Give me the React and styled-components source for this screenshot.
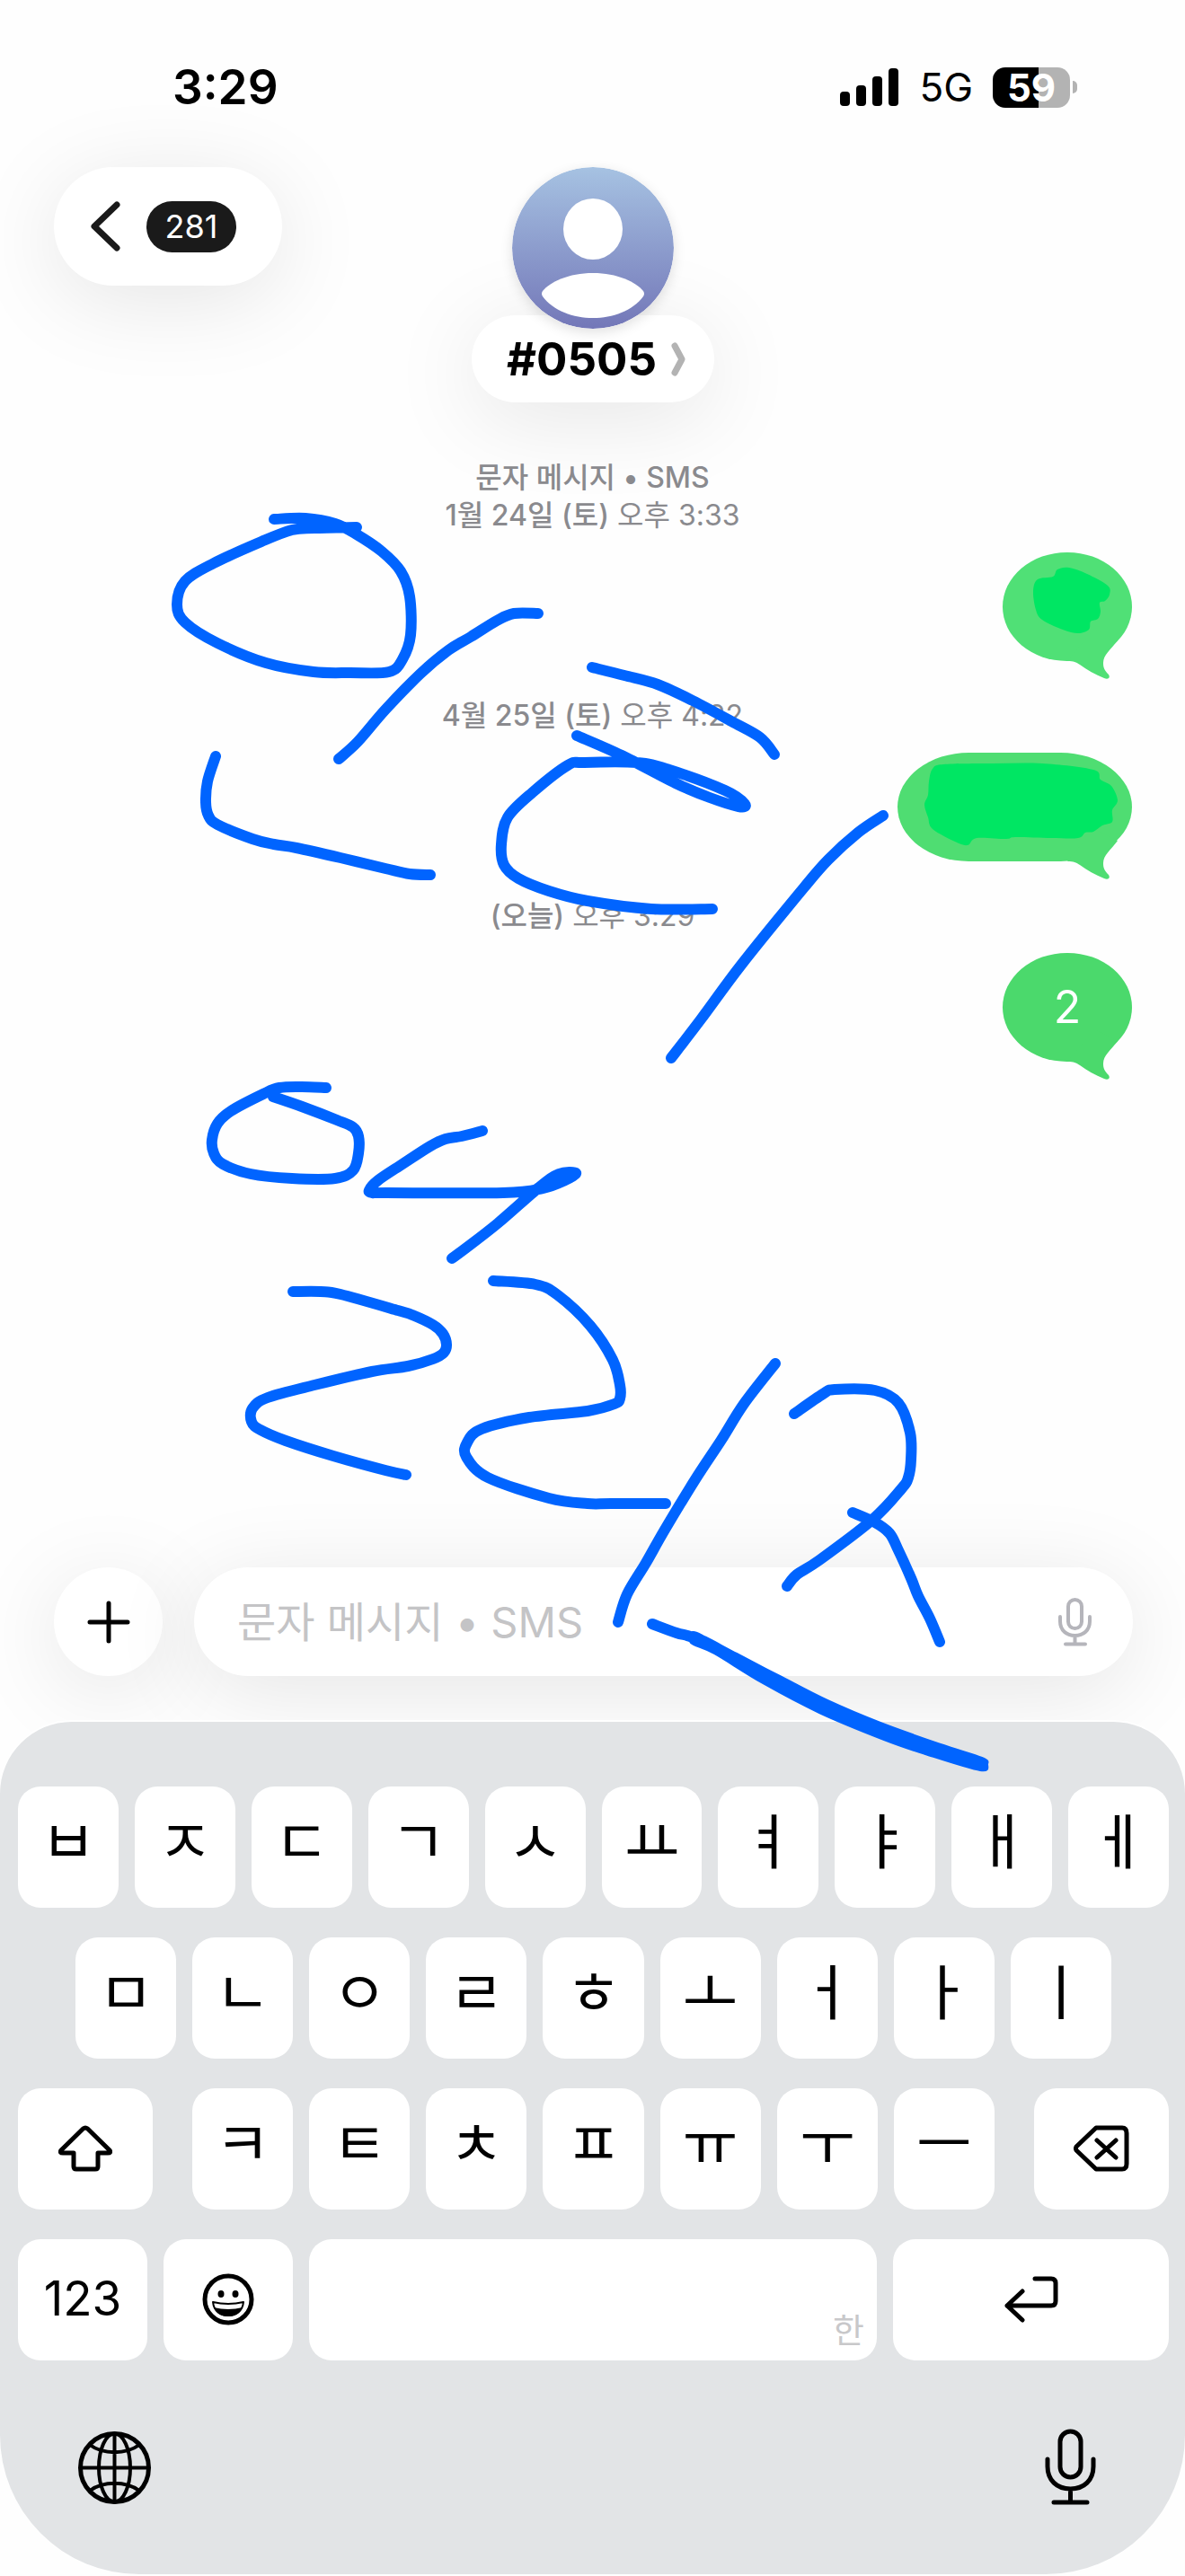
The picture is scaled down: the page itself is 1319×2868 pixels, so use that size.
import React, { useState } from "react";
import styled, { createGlobalStyle, css } from "styled-components";

const GlobalStyle = createGlobalStyle`
  * {
    box-sizing: border-box;
  }

  body {
    margin: 0;
    background-color: #fefefe;
    font-family: Inter, "Noto Sans CJK KR", sans-serif;
    color: #000;
  }

  button, input {
    margin: 0;
    padding: 0;
    border: none;
    background: none;
    font: inherit;
    color: inherit;
  }
`;

const floating = css`
  background-color: #fff;
  box-shadow: 0 16px 100px rgba(0, 0, 0, 0.1);
`;

const Screen = styled.div`
  position: relative;
  display: flex;
  flex-direction: column;
  min-height: 100vh;
  padding-bottom: 2px;
  overflow: hidden;
`;

const StatusBar = styled.header`
  display: flex;
  align-items: center;
  justify-content: space-between;
  height: 118px;
  margin-top: 38px;
  padding: 0 128px 0 192px;
`;

const Time = styled.time`
  font-size: 53px;
  line-height: 80px;
  font-weight: 600;
`;

const StatusIcons = styled.div`
  display: flex;
  align-items: center;
  gap: 22px;
`;

const Network = styled.span`
  font-size: 44px;
  line-height: 80px;
`;

const Battery = styled.div`
  position: relative;
  display: flex;
  align-items: center;
  justify-content: center;
  width: 86px;
  height: 45px;
  border-radius: 14px;
  background: linear-gradient(to right, #000 59%, #b3b3b3 59%);
  color: #fff;
  font-size: 42px;
  font-weight: 700;

  &::after {
    content: "";
    position: absolute;
    right: -8px;
    width: 5px;
    height: 14px;
    border-radius: 0 6px 6px 0;
    background-color: #b3b3b3;
  }
`;

const TopBar = styled.div`
  display: grid;
  grid-template-columns: 1fr auto 1fr;
  align-items: start;
  margin-top: 30px;
  padding: 0 59px 0 60px;
`;

const BackButton = styled.button`
  ${floating}
  display: flex;
  align-items: center;
  justify-self: start;
  gap: 28px;
  height: 132px;
  padding: 0 51px 0 39px;
  border-radius: 66px;
`;

const Unread = styled.span`
  width: 100px;
  border-radius: 29px;
  background-color: #1a1a1a;
  color: #fff;
  font-size: 36px;
  line-height: 57px;
  text-align: center;
`;

const Contact = styled.div`
  display: flex;
  flex-direction: column;
  align-items: center;
`;

const Avatar = styled.svg`
  position: relative;
  z-index: 1;
  display: block;
  border-radius: 50%;
  box-shadow: 0 4px 14px rgba(0, 0, 0, 0.12);
`;

const ContactName = styled.button`
  ${floating}
  display: flex;
  align-items: center;
  gap: 16px;
  height: 97px;
  margin-top: -15px;
  padding: 0 31px 0 39px;
  border-radius: 49px;
  font-size: 51px;
  font-weight: 700;
`;

const Thread = styled.main`
  display: flex;
  flex: 1;
  flex-direction: column;
  padding: 23px 59px 0;
`;

const Stamp = styled.p`
  margin: 0;
  padding: 40px 0 20px;
  color: #8a8a8e;
  font-size: 32px;
  line-height: 42px;
  text-align: center;
`;

const StampDay = styled.span`
  font-weight: 500;
`;

const Bubble = styled.div`
  position: relative;
  align-self: flex-end;
  width: ${(props) => (props.$wide ? "261px" : "144px")};
  height: 121px;
  border-radius: 72px / 61px;
  background-color: ${(props) => props.$tint};
  color: #fff;
  font-size: 50px;
  line-height: 121px;
  text-align: center;
  ${(props) => props.$wide && css`
    border-radius: 80px / 61px;
  `}
`;

const Tail = styled.svg`
  position: absolute;
  right: 8px;
  bottom: -20px;
`;

const Composer = styled.form`
  display: flex;
  gap: 35px;
  padding: 0 58px 51px 60px;
`;

const PlusButton = styled.button`
  ${floating}
  display: flex;
  align-items: center;
  justify-content: center;
  width: 121px;
  height: 121px;
  border-radius: 50%;
`;

const Field = styled.div`
  ${floating}
  display: flex;
  flex: 1;
  align-items: center;
  height: 121px;
  padding: 0 46px 0 48px;
  border-radius: 61px;
`;

const MessageInput = styled.input`
  flex: 1;
  min-width: 0;
  outline: none;
  font-size: 47px;
  line-height: 80px;

  &::placeholder {
    color: #c4c4c6;
    opacity: 1;
  }
`;

const IconButton = styled.button`
  display: flex;
  color: ${(props) => (props.$muted ? "#b5b5bb" : "#000")};
`;

const Keyboard = styled.section`
  position: relative;
  padding: 72px 18px 79px 20px;
  border-radius: 80px 80px 155px 155px;
  background-color: #e2e4e6;
  box-shadow: 0 -2px 0 #fff;
`;

const KeyRow = styled.div`
  display: flex;
  justify-content: space-between;
  gap: 18px;
  margin-bottom: 33px;
  padding: 0 ${(props) => (props.$inset ? "64px" : "0")};
`;

const KeyGroup = styled.div`
  display: flex;
  flex: 892;
  gap: 18px;
  margin: 0 26px;
`;

const Key = styled.button`
  display: flex;
  flex: ${(props) => props.$grow || 112} 1 0;
  align-items: center;
  justify-content: center;
  min-width: 0;
  height: 135px;
  padding-bottom: ${(props) => (props.$letter ? "12px" : "2px")};
  border-radius: 25px;
  background-color: #fff;
  font-size: ${(props) => (props.$letter ? "67px" : "53px")};
  line-height: 1;
`;

const SpaceKey = styled(Key)`
  align-items: flex-end;
  justify-content: flex-end;
  padding: 0 14px 10px;
  color: #c8c8ca;
  font-size: 38px;
  line-height: 48px;
`;

const KeyboardFooter = styled.div`
  display: flex;
  align-items: center;
  justify-content: space-between;
  height: 80px;
  margin-top: 79px;
  padding: 0 81px 0 67px;
`;

const Markup = styled.svg`
  position: absolute;
  top: 0;
  left: 0;
  width: 100%;
  pointer-events: none;
`;

const inkStrokes = [
  [[305, 578], [340, 577], [373, 583], [397, 595], [425, 614], [446, 636], [456, 664], [457, 707], [448, 734], [433, 748], [390, 749], [349, 748], [296, 738], [242, 716], [206, 693], [197, 673], [206, 647], [238, 627], [291, 603], [325, 590], [350, 588], [397, 587]],
  [[599, 683], [572, 683], [553, 691], [524, 709], [499, 724], [468, 750], [429, 790], [398, 826], [377, 845]],
  [[659, 743], [695, 752], [732, 762], [771, 780], [814, 803], [846, 821], [862, 840]],
  [[240, 842], [231, 870], [229, 893], [232, 908], [242, 918], [281, 934], [305, 940], [330, 944], [379, 955], [429, 967], [456, 973], [479, 974]],
  [[642, 819], [692, 841], [752, 872], [790, 888], [822, 898], [829, 895], [807, 880], [745, 857], [709, 849], [650, 849], [632, 852], [593, 882], [565, 910], [558, 940], [561, 963], [577, 978], [611, 992], [654, 1003], [725, 1012], [793, 1012]],
  [[983, 908], [955, 927], [922, 957], [895, 988], [826, 1073], [780, 1135], [747, 1178]],
  [[363, 1211], [336, 1210], [311, 1211], [293, 1218], [257, 1237], [242, 1251], [236, 1269], [238, 1284], [248, 1296], [279, 1307], [325, 1312], [373, 1312], [393, 1303], [399, 1284], [399, 1265], [393, 1255], [375, 1247], [336, 1232], [304, 1221]],
  [[537, 1259], [514, 1265], [496, 1268], [479, 1276], [448, 1296], [421, 1314], [411, 1325], [415, 1328], [430, 1328], [560, 1328], [604, 1323], [629, 1314], [641, 1306], [622, 1307], [600, 1322], [554, 1362], [518, 1390], [503, 1401]],
  [[326, 1438], [357, 1438], [379, 1441], [443, 1459], [459, 1464], [482, 1475], [493, 1485], [497, 1497], [494, 1506], [482, 1513], [454, 1521], [414, 1527], [350, 1542], [298, 1556], [281, 1568], [280, 1583], [290, 1592], [318, 1604], [371, 1621], [429, 1637], [452, 1642]],
  [[549, 1426], [596, 1430], [621, 1442], [657, 1476], [682, 1514], [690, 1542], [690, 1557], [684, 1563], [654, 1571], [589, 1578], [536, 1591], [520, 1606], [519, 1622], [543, 1645], [611, 1668], [654, 1674], [680, 1674], [741, 1674]],
  [[863, 1518], [828, 1563], [803, 1603], [774, 1647], [740, 1703], [719, 1740], [698, 1775], [688, 1806]],
  [[884, 1574], [916, 1552], [929, 1547], [974, 1548], [1000, 1562], [1013, 1595], [1014, 1625], [1011, 1645], [1003, 1658], [971, 1692], [912, 1737], [887, 1753], [876, 1766]],
  [[949, 1684], [974, 1695], [990, 1707], [999, 1724], [1014, 1757], [1022, 1777], [1035, 1802], [1046, 1828]],
  [[726, 1808], [753, 1818], [771, 1823], [802, 1838]],
];

// outline of the last stroke, which gets heavier towards its end
const heavyStroke = [
  [771, 1817], [786, 1823], [820, 1841], [870, 1867], [921, 1893], [980, 1918], [1047, 1942], [1093, 1957], [1099, 1964],
  [1091, 1971], [1030, 1953], [984, 1937], [912, 1907], [849, 1874], [795, 1841], [769, 1829],
];

const coverUps = [
  [[1150, 658], [1155, 645], [1172, 642], [1177, 634], [1190, 632], [1210, 639], [1233, 652], [1235, 662], [1230, 669], [1224, 671], [1225, 681], [1222, 689], [1214, 692], [1212, 701], [1200, 705], [1183, 701], [1160, 690], [1153, 679]],
  [[1034, 870], [1038, 856], [1050, 851], [1105, 850], [1160, 850], [1217, 857], [1225, 868], [1237, 875], [1244, 891], [1238, 902], [1238, 915], [1227, 919], [1217, 926], [1208, 927], [1200, 933], [1170, 933], [1130, 932], [1120, 934], [1087, 933], [1077, 941], [1063, 937], [1038, 923], [1033, 910], [1029, 896], [1033, 885]],
];

// Catmull-Rom spline through the points, written as cubic beziers
function smoothPath(points, closed) {
  const n = points.length;
  const at = (i) => (closed ? points[(i + n) % n] : points[Math.max(0, Math.min(n - 1, i))]);
  let d = `M${points[0][0]} ${points[0][1]}`;
  for (let i = 0; i < (closed ? n : n - 1); i++) {
    const [a, b, c, e] = [at(i - 1), at(i), at(i + 1), at(i + 2)];
    d += `C${b[0] + (c[0] - a[0]) / 6} ${b[1] + (c[1] - a[1]) / 6} ${c[0] - (e[0] - b[0]) / 6} ${c[1] - (e[1] - b[1]) / 6} ${c[0]} ${c[1]}`;
  }
  return closed ? d + "Z" : d;
}

const Line = ({ w, h, weight, children }) => (
  <svg
    width={w}
    height={h}
    viewBox={`0 0 ${w} ${h}`}
    fill="none"
    stroke="currentColor"
    strokeWidth={weight}
    strokeLinecap="round"
    strokeLinejoin="round"
    aria-hidden="true"
  >
    {children}
  </svg>
);

const SignalIcon = () => (
  <svg width="66" height="42" viewBox="0 0 66 42" aria-hidden="true">
    <rect x="0" y="26" width="11" height="16" rx="4" />
    <rect x="18" y="19" width="11" height="23" rx="4" />
    <rect x="36" y="9" width="11" height="33" rx="4" />
    <rect x="54" y="0" width="11" height="42" rx="4" />
  </svg>
);

const BubbleTail = ({ color }) => (
  <Tail width="64" height="56" viewBox="0 0 64 56" fill={color} aria-hidden="true">
    <path d="M0 36C8 36 9 37 14 40C22 46 31 51 41 55C46 57 48 54 46 51C41 46 40 43 40 38C40 29 48 24 56 13L30 0Z" />
  </Tail>
);

const MicIcon = () => (
  <Line w={37} h={54} weight={4}>
    <rect x="11" y="2" width="15" height="32" rx="7.5" />
    <path d="M2 21V26C2 36 9 42 18.5 42C28 42 35 36 35 26V21M18.5 42V51M8 51.5H30" />
  </Line>
);

const BigMicIcon = () => (
  <Line w={57} h={86} weight={5}>
    <rect x="17" y="3" width="23" height="51" rx="11.5" />
    <path d="M3 34V42C3 57 13 67 28.5 67C44 67 54 57 54 42V34M28.5 67V82M10 82H47" />
  </Line>
);

const GlobeIcon = () => (
  <Line w={81} h={81} weight={4}>
    <circle cx="40.5" cy="40.5" r="38" strokeWidth="5" />
    <ellipse cx="40.5" cy="40.5" rx="17.5" ry="38" />
    <path d="M40.5 3V78M3 40.5H78M13 15C28 26 53 26 68 15M13 66C28 55 53 55 68 66" />
  </Line>
);

const ShiftIcon = () => (
  <Line w={60} h={52} weight={5}>
    <path d="M27.5 4Q30 2 32.5 4L57 28Q59 31 55 31H44V46Q44 49 41 49H20Q17 49 17 46V31H5Q1 31 3 28Z" />
  </Line>
);

const DeleteIcon = () => (
  <Line w={62} h={52} weight={5}>
    <path d="M25 3H54Q59 3 59 9V43Q59 49 54 49H25L3 28Q2 26 3 24ZM26 17L47 36M47 17L26 36" />
  </Line>
);

const ReturnIcon = () => (
  <Line w={60} h={52} weight={5}>
    <path d="M34 3H52Q57 3 57 8V28Q57 33 52 33H3M20 17L3 33L20 49" />
  </Line>
);

const EmojiIcon = () => (
  <Line w={58} h={58} weight={5}>
    <circle cx="29" cy="29" r="26" />
    <g stroke="none" fill="currentColor">
      <ellipse cx="21" cy="23" rx="3.5" ry="4" />
      <ellipse cx="37" cy="23" rx="3.5" ry="4" />
    </g>
    <path d="M12 32Q29 36 46 32C45 42 38 47 29 47C20 47 13 42 12 32Z" strokeWidth="2" />
    <path d="M13 38Q29 42 45 38C42 45 36 48 29 48C22 48 16 45 13 38Z" fill="currentColor" stroke="none" />
  </Line>
);

const letters = (chars) =>
  [...chars].map((char) => (
    <Key key={char} type="button" $letter>
      {char}
    </Key>
  ));

function App() {
  const [message, setMessage] = useState("");

  return (
    <Screen>
      <GlobalStyle />
      <StatusBar>
        <Time>3:29</Time>
        <StatusIcons>
          <SignalIcon />
          <Network>5G</Network>
          <Battery>59</Battery>
        </StatusIcons>
      </StatusBar>

      <TopBar>
        <BackButton type="button" aria-label="뒤로">
          <Line w={36} h={58} weight={7}>
            <path d="M31 5L6 29L31 53" stroke="#1a1a1a" />
          </Line>
          <Unread>281</Unread>
        </BackButton>
        <Contact>
          <Avatar width="180" height="180" viewBox="0 0 180 180" aria-hidden="true">
            <defs>
              <linearGradient id="avatar" x1="0" y1="0" x2="0" y2="1">
                <stop offset="0" stopColor="#a6c2e2" />
                <stop offset="1" stopColor="#7377b8" />
              </linearGradient>
            </defs>
            <circle cx="90" cy="90" r="90" fill="url(#avatar)" />
            <ellipse cx="90" cy="69" rx="33" ry="34" fill="#fff" />
            <path d="M90 118C117 118 138 128 146 138Q148 141 146 144C134 160 112 168 90 168C68 168 46 160 34 144Q32 141 34 138C42 128 63 118 90 118Z" fill="#fff" />
          </Avatar>
          <ContactName type="button">
            #0505
            <Line w={17} h={40} weight={7}>
              <path d="M4 5L12 20L4 35" stroke="#b3b3b3" />
            </Line>
          </ContactName>
        </Contact>
      </TopBar>

      <Thread>
        <Stamp>
          <StampDay>문자 메시지 • SMS</StampDay>
          <br />
          <StampDay>1월 24일 (토)</StampDay> 오후 3:33
        </Stamp>
        <Bubble $tint="#50e076">
          <BubbleTail color="#50e076" />
        </Bubble>
        <Stamp>
          <StampDay>4월 25일 (토)</StampDay> 오후 4:22
        </Stamp>
        <Bubble $wide $tint="#4fdd72">
          <BubbleTail color="#4fdd72" />
        </Bubble>
        <Stamp>
          <StampDay>(오늘)</StampDay> 오후 3:29
        </Stamp>
        <Bubble $tint="#4bd96c">
          2
          <BubbleTail color="#4bd96c" />
        </Bubble>
      </Thread>

      <Composer onSubmit={(e) => e.preventDefault()}>
        <PlusButton type="button" aria-label="추가">
          <Line w={48} h={48} weight={5}>
            <path d="M24 3V45M3 24H45" />
          </Line>
        </PlusButton>
        <Field>
          <MessageInput
            aria-label="메시지"
            placeholder="문자 메시지 • SMS"
            value={message}
            onChange={(e) => setMessage(e.target.value)}
          />
          <IconButton type="button" aria-label="음성 입력" $muted>
            <MicIcon />
          </IconButton>
        </Field>
      </Composer>

      <Keyboard>
        <KeyRow>{letters("ㅂㅈㄷㄱㅅㅛㅕㅑㅐㅔ")}</KeyRow>
        <KeyRow $inset>{letters("ㅁㄴㅇㄹㅎㅗㅓㅏㅣ")}</KeyRow>
        <KeyRow>
          <Key type="button" $grow={150} aria-label="shift">
            <ShiftIcon />
          </Key>
          <KeyGroup>{letters("ㅋㅌㅊㅍㅠㅜㅡ")}</KeyGroup>
          <Key type="button" $grow={150} aria-label="삭제">
            <DeleteIcon />
          </Key>
        </KeyRow>
        <KeyRow>
          <Key type="button" $grow={144}>123</Key>
          <Key type="button" $grow={144} aria-label="이모티콘">
            <EmojiIcon />
          </Key>
          <SpaceKey type="button" $grow={604}>한</SpaceKey>
          <Key type="button" $grow={307} aria-label="이동">
            <ReturnIcon />
          </Key>
        </KeyRow>
        <KeyboardFooter>
          <IconButton type="button" aria-label="다음 키보드">
            <GlobeIcon />
          </IconButton>
          <IconButton type="button" aria-label="받아쓰기">
            <BigMicIcon />
          </IconButton>
        </KeyboardFooter>
      </Keyboard>

      <Markup viewBox="0 0 1319 2868" fill="none" strokeLinecap="round" strokeLinejoin="round" aria-hidden="true">
        {coverUps.map((points, i) => (
          <path key={i} d={smoothPath(points, true)} fill="#00e663" />
        ))}
        <g stroke="#0064ff" strokeWidth="12">
          {inkStrokes.map((points, i) => (
            <path key={i} d={smoothPath(points)} />
          ))}
          <path d={smoothPath(heavyStroke, true)} fill="#0064ff" strokeWidth="2" />
        </g>
      </Markup>
    </Screen>
  );
}

export default App;
